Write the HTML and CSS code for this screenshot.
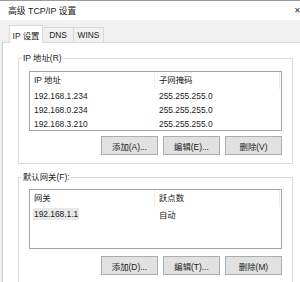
FILE: index.html
```html
<!DOCTYPE html>
<html lang="zh-CN">
<head>
  <meta charset="UTF-8" />
  <title>高级 TCP/IP 设置</title>
  <link rel="stylesheet" href="styles.css">
</head>
<body>

  <div class="window">
    <div class="titlebar">
      <span class="title">高级 TCP/IP 设置</span>
      <span class="close">✕</span>
    </div>

    <div class="dialog">
      <div class="tabs">
        <div class="tab active">IP 设置</div>
        <div class="tab dns">DNS</div>
        <div class="tab wins">WINS</div>
      </div>

      <div class="panel">
        <fieldset class="group first">
          <legend>IP 地址(R)</legend>
          <div class="listview">
            <div class="lv-head">
              <span class="col">IP 地址</span>
              <span class="col">子网掩码</span>
            </div>
            <div class="lv-row"><span class="col">192.168.1.234</span><span class="col">255.255.255.0</span></div>
            <div class="lv-row"><span class="col">192.168.0.234</span><span class="col">255.255.255.0</span></div>
            <div class="lv-row"><span class="col">192.168.3.210</span><span class="col">255.255.255.0</span></div>
          </div>
          <div class="buttons">
            <button class="btn">添加(A)...</button>
            <button class="btn">编辑(E)...</button>
            <button class="btn">删除(V)</button>
          </div>
        </fieldset>

        <fieldset class="group second">
          <legend>默认网关(F):</legend>
          <div class="listview">
            <div class="lv-head">
              <span class="col">网关</span>
              <span class="col">跃点数</span>
            </div>
            <div class="lv-row"><span class="col"><span class="selected">192.168.1.1</span></span><span class="col">自动</span></div>
          </div>
          <div class="buttons">
            <button class="btn">添加(D)...</button>
            <button class="btn">编辑(T)...</button>
            <button class="btn">删除(M)</button>
          </div>
        </fieldset>
      </div>
    </div>
  </div>

</body>
</html>
```

FILE: styles.css
```css
body {
  margin: 0;
  width: 300px;
  height: 282px;
  overflow: hidden;
  background-color: #f0f0f0;
  font-family: 'Liberation Sans', 'Noto Sans CJK SC', sans-serif;
  font-size: 8.4px;
  color: #1a1a1a;
}

.window {
  border-top: 1px solid #9a9a9a;
}

.titlebar {
  height: 19px;
  background-color: #fff;
  display: flex;
  align-items: center;
  justify-content: space-between;
  padding-left: 8px;
}

.title {
  font-size: 8.8px;
}

.close {
  font-size: 8px;
  color: #333;
  margin-right: -1px;
}

/* tab strip */
.tabs {
  height: 22px;
  display: flex;
  align-items: flex-end;
  padding-left: 9px;
}

.tab {
  height: 15px;
  box-sizing: border-box;
  border: 1px solid #d9d9d9;
  border-bottom: none;
  border-left: none;
  display: flex;
  align-items: center;
  justify-content: center;
}

.tab.active {
  position: relative;
  z-index: 1;
  width: 34px;
  height: 18px;
  margin-bottom: -1px;
  border-left: 1px solid #d9d9d9;
  background-color: #fff;
}

.dns {
  width: 31px;
}

.wins {
  width: 30px;
}

.panel {
  margin-left: 2px;
  height: 239px;
  overflow: hidden;
  background-color: #fff;
  border-top: 1px solid #d9d9d9;
  border-left: 1px solid #cfcfcf;
}

/* group boxes */
.group {
  box-sizing: border-box;
  width: 275px;
  margin: 0 0 0 15px;
  padding: 0 0 8px 10px;
  border: 1px solid #dcdcdc;
}

.group.first {
  margin-top: 9px;
}

.group.second {
  margin-top: 7px;
}

.group legend {
  line-height: 12px;
  padding: 0 1px;
  margin-left: -7px;
}

.listview {
  box-sizing: border-box;
  width: 253px;
  height: 60px;
  margin-top: 7px;
  border: 1px solid #a3a3a3;
  overflow: hidden;
}

.second .listview {
  margin-top: 6px;
}

.lv-head {
  height: 17px;
  display: flex;
  align-items: center;
}

.lv-head .col {
  box-sizing: border-box;
  width: 125px;
  height: 17px;
  line-height: 17px;
  padding-left: 4px;
  border-right: 1px solid #ececec;
}

.lv-row {
  height: 14px;
  display: flex;
  align-items: center;
}

.lv-row .col {
  box-sizing: border-box;
  width: 125px;
  padding-left: 4px;
}

.selected {
  background-color: #e8e8e8;
  padding: 1px 1px;
  margin-left: -1px;
}

.buttons {
  width: 253px;
  display: flex;
  justify-content: flex-end;
  gap: 5px;
  margin-top: 5px;
}

.second .buttons {
  margin-top: 7px;
}

.btn {
  width: 57px;
  height: 19px;
  padding: 0;
  font-family: inherit;
  font-size: 8.4px;
  color: #1a1a1a;
  background-color: #e1e1e1;
  border: 1px solid #adadad;
}
```
